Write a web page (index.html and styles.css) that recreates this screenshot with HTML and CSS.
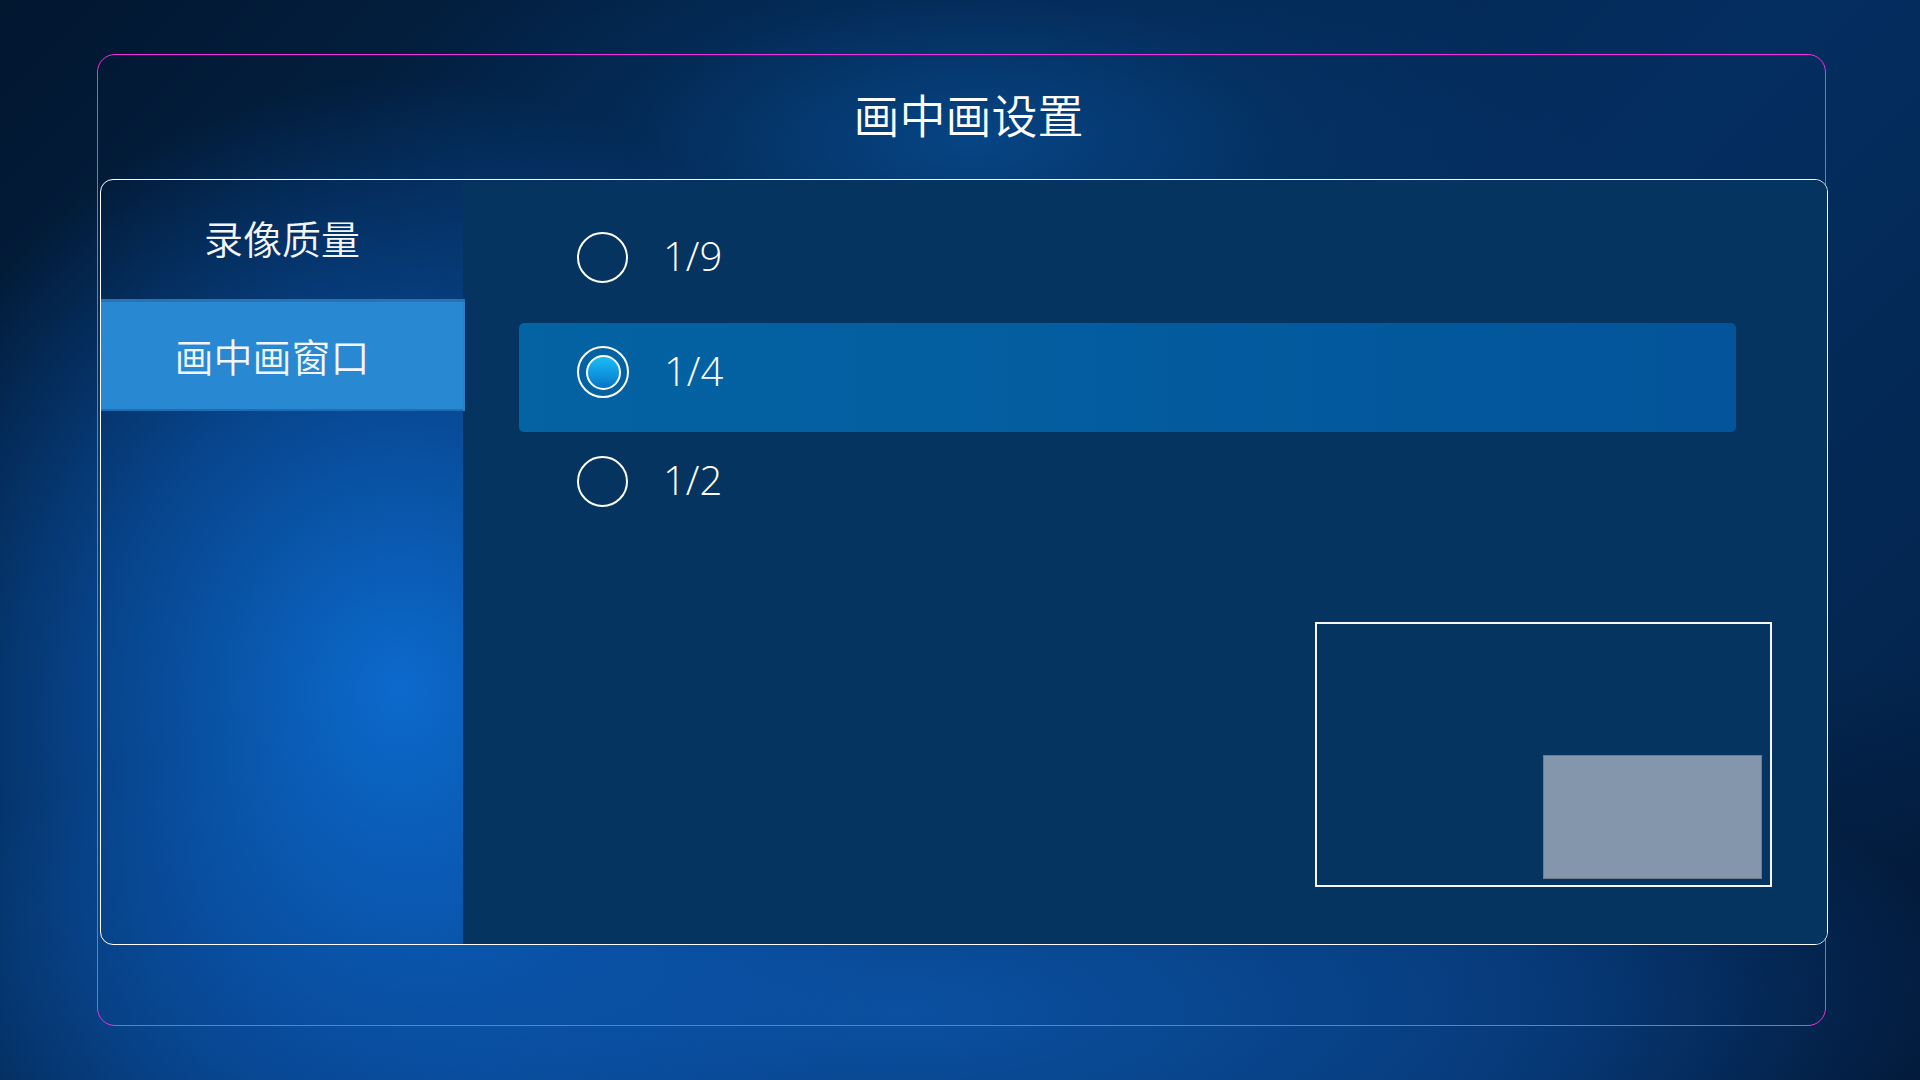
FILE: index.html
```html
<!DOCTYPE html>
<html lang="zh-CN">
<head>
<meta charset="utf-8">
<title>画中画设置</title>
<link rel="stylesheet" href="styles.css">
</head>
<body>
<div class="frame">
  <div class="title">画中画设置</div>
  <div class="panel">
    <div class="sidebar">
      <div class="menu-item">录像质量</div>
      <div class="menu-item active">画中画窗口</div>
    </div>
    <div class="content">
      <div class="option first">
        <span class="radio"></span>
        <span class="label">1/9</span>
      </div>
      <div class="option selected">
        <span class="radio checked"><span class="dot"></span></span>
        <span class="label">1/4</span>
      </div>
      <div class="option">
        <span class="radio"></span>
        <span class="label">1/2</span>
      </div>
      <div class="preview">
        <div class="pip"></div>
      </div>
    </div>
  </div>
</div>
</body>
</html>
```

FILE: styles.css
```css
* { box-sizing: border-box; }
html, body { margin: 0; padding: 0; }
body {
  width: 1920px;
  height: 1080px;
  overflow: hidden;
  font-family: "Noto Sans CJK SC", "Noto Sans", sans-serif;
  color: #ffffff;
  background:
    radial-gradient(ellipse 640px 720px at 400px 690px, rgba(12,110,212,0.95) 0%, rgba(10,88,180,0.65) 45%, rgba(8,60,140,0) 85%),
    radial-gradient(ellipse 1100px 340px at 900px 1010px, rgba(11,84,168,0.9) 0%, rgba(9,72,150,0.6) 60%, rgba(6,50,110,0) 100%),
    radial-gradient(ellipse 620px 260px at 970px 140px, rgba(7,74,142,0.85) 0%, rgba(5,55,110,0.4) 55%, rgba(3,40,80,0) 100%),
    radial-gradient(ellipse 600px 600px at 1850px 1080px, rgba(2,22,50,0.9) 0%, rgba(2,22,50,0) 70%),
    linear-gradient(135deg, #021730 0%, #03264e 35%, #042e60 60%, #032650 85%, #021a3a 100%);
}
.frame {
  margin: 54px 0 0 97px;
  width: 1729px;
  height: 972px;
  border: 1px solid #f42ee2;
  border-radius: 18px;
}
.title {
  height: 124px;
  display: flex;
  align-items: center;
  justify-content: center;
  padding-left: 14px;
  padding-bottom: 8px;
  font-size: 46px;
  font-weight: 350;
}
.panel {
  margin-left: 2px;
  width: 1728px;
  height: 766px;
  border: 1.5px solid #ffffff;
  border-radius: 13px;
  display: flex;
  overflow: hidden;
}
.sidebar {
  width: 362px;
  flex: none;
  display: flex;
  flex-direction: column;
}
.menu-item {
  height: 119px;
  display: flex;
  align-items: center;
  justify-content: center;
  font-size: 39px;
  font-weight: 350;
  color: #f2f6fb;
  padding-bottom: 6px;
}
.menu-item.active {
  position: relative;
  z-index: 1;
  width: 364px;
  height: 112px;
  padding-right: 22px;
  padding-bottom: 0;
  background: #2888d2;
  box-shadow: inset 0 3px 0 #2b72b2, inset -2px 0 0 #2f7dc2, inset 0 -2px 0 #1f6cb2;
}
.content {
  flex: 1;
  background: #04345f;
  padding: 28px 0 0 56px;
  display: flex;
  flex-direction: column;
}
.option {
  width: 1217px;
  height: 109px;
  flex: none;
  display: flex;
  align-items: center;
  padding: 0 0 11px 58px;
}
.option.first { margin-bottom: 6px; }
.option.selected {
  border-radius: 5px;
  background: linear-gradient(90deg, #0463a3 0%, #035c9f 50%, #03549a 100%);
}
.radio {
  width: 51px;
  height: 51px;
  flex: none;
  border: 2px solid #ffffff;
  border-radius: 50%;
  display: flex;
  align-items: center;
  justify-content: center;
}
.radio.checked {
  width: 52px;
  height: 52px;
}
.dot {
  width: 35px;
  height: 35px;
  border-radius: 50%;
  border: 2.5px solid #ffffff;
  background: linear-gradient(180deg, #1bbcf4 0%, #109ae0 50%, #0873c6 100%);
}
.label {
  margin-left: 35px;
  margin-bottom: 3px;
  font-family: "Open Sans", "Noto Sans", sans-serif;
  font-weight: 300;
  font-size: 40px;
  line-height: 1;
  color: #ffffff;
}
.preview {
  margin: 81px 0 0 796px;
  width: 457px;
  height: 265px;
  flex: none;
  border: 2px solid #f4f6f8;
  display: flex;
  justify-content: flex-end;
  align-items: flex-end;
  padding: 0 8px 6px 0;
}
.pip {
  width: 219px;
  height: 124px;
  background: #8396ac;
  border: 1px solid #6d7d8e;
}
```
